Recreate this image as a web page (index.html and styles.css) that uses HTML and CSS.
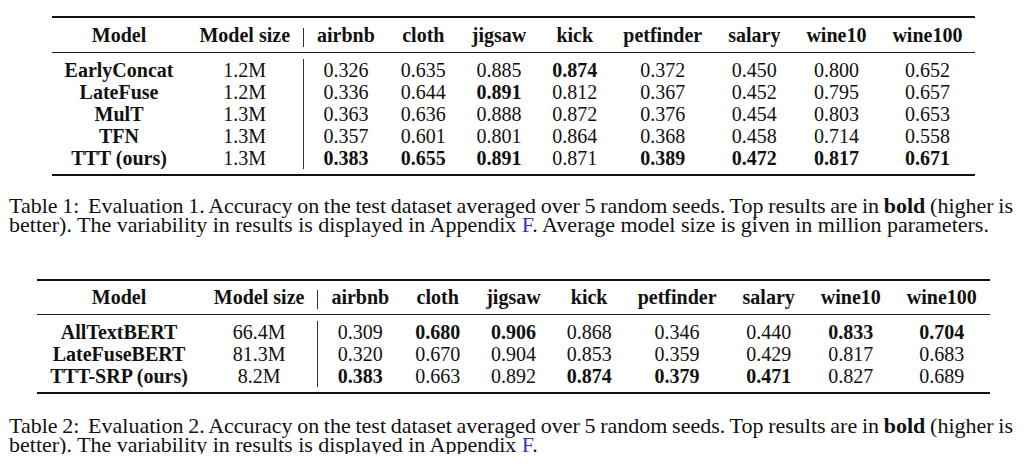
FILE: index.html
```html
<!DOCTYPE html>
<html lang="en">
<head>
<meta charset="utf-8">
<title>Evaluation tables</title>
<link rel="stylesheet" href="styles.css">
</head>
<body>
<main class="page">
  <section class="figure figure-1">
    <table class="results">
      <thead>
        <tr class="gap gap-top"><td colspan="10"></td></tr>
        <tr class="head">
          <th>Model</th><th class="sep">Model size</th>
          <th>airbnb</th><th>cloth</th><th>jigsaw</th><th>kick</th><th>petfinder</th><th>salary</th><th>wine10</th><th>wine100</th>
        </tr>
        <tr class="gap gap-head"><td colspan="10"></td></tr>
      </thead>
      <tbody>
        <tr class="gap gap-mid"><td colspan="10"></td></tr>
        <tr><th>EarlyConcat</th><td class="sep">1.2M</td><td>0.326</td><td>0.635</td><td>0.885</td><td class="b">0.874</td><td>0.372</td><td>0.450</td><td>0.800</td><td>0.652</td></tr>
        <tr><th>LateFuse</th><td class="sep">1.2M</td><td>0.336</td><td>0.644</td><td class="b">0.891</td><td>0.812</td><td>0.367</td><td>0.452</td><td>0.795</td><td>0.657</td></tr>
        <tr><th>MulT</th><td class="sep">1.3M</td><td>0.363</td><td>0.636</td><td>0.888</td><td>0.872</td><td>0.376</td><td>0.454</td><td>0.803</td><td>0.653</td></tr>
        <tr><th>TFN</th><td class="sep">1.3M</td><td>0.357</td><td>0.601</td><td>0.801</td><td>0.864</td><td>0.368</td><td>0.458</td><td>0.714</td><td>0.558</td></tr>
        <tr><th>TTT (ours)</th><td class="sep">1.3M</td><td class="b">0.383</td><td class="b">0.655</td><td class="b">0.891</td><td>0.871</td><td class="b">0.389</td><td class="b">0.472</td><td class="b">0.817</td><td class="b">0.671</td></tr>
        <tr class="gap gap-bottom"><td colspan="10"></td></tr>
      </tbody>
    </table>
  </section>
  <p class="caption caption-1">
    <span class="line line-full"><span class="label">Table 1:</span> Evaluation 1. Accuracy on the test dataset averaged over 5 random seeds. Top results are in <b>bold</b> (higher is</span>
    <span class="line">better). The variability in results is displayed in Appendix <a class="ref" href="#appendix-f">F</a>. Average model size is given in million parameters.</span>
  </p>

  <section class="figure figure-2">
    <table class="results">
      <thead>
        <tr class="gap gap-top"><td colspan="10"></td></tr>
        <tr class="head">
          <th>Model</th><th class="sep">Model size</th>
          <th>airbnb</th><th>cloth</th><th>jigsaw</th><th>kick</th><th>petfinder</th><th>salary</th><th>wine10</th><th>wine100</th>
        </tr>
        <tr class="gap gap-head"><td colspan="10"></td></tr>
      </thead>
      <tbody>
        <tr class="gap gap-mid"><td colspan="10"></td></tr>
        <tr><th>AllTextBERT</th><td class="sep">66.4M</td><td>0.309</td><td class="b">0.680</td><td class="b">0.906</td><td>0.868</td><td>0.346</td><td>0.440</td><td class="b">0.833</td><td class="b">0.704</td></tr>
        <tr><th>LateFuseBERT</th><td class="sep">81.3M</td><td>0.320</td><td>0.670</td><td>0.904</td><td>0.853</td><td>0.359</td><td>0.429</td><td>0.817</td><td>0.683</td></tr>
        <tr><th>TTT-SRP (ours)</th><td class="sep">8.2M</td><td class="b">0.383</td><td>0.663</td><td>0.892</td><td class="b">0.874</td><td class="b">0.379</td><td class="b">0.471</td><td>0.827</td><td>0.689</td></tr>
        <tr class="gap gap-bottom"><td colspan="10"></td></tr>
      </tbody>
    </table>
  </section>
  <p class="caption caption-2">
    <span class="line line-full"><span class="label">Table 2:</span> Evaluation 2. Accuracy on the test dataset averaged over 5 random seeds. Top results are in <b>bold</b> (higher is</span>
    <span class="line">better). The variability in results is displayed in Appendix <a class="ref" href="#appendix-f">F</a>.</span>
  </p>
</main>
</body>
</html>
```

FILE: styles.css
```css
html, body {
  margin: 0;
  padding: 0;
  background: #ffffff;
}

body {
  font-family: "Liberation Serif", "Times New Roman", serif;
  color: #111111;
}

.page {
  width: 1004px;
  padding: 16px 0 0 9px;
}

.figure {
  padding-left: 5px;
}

.results {
  margin: 0 auto;
  border-collapse: separate;
  border-spacing: 0;
  border-top: 2px solid #111111;
  border-bottom: 2px solid #111111;
  font-size: 20px;
}

.results th,
.results td {
  padding: 0 13px;
  text-align: center;
  white-space: nowrap;
  line-height: 22px;
  font-weight: normal;
}

.results th {
  font-weight: bold;
}

.results .b {
  font-weight: bold;
}

.results .head th {
  line-height: 14px;
  padding-bottom: 5px;
  vertical-align: top;
}

.results .sep {
  border-right: 1px solid #333333;
}

.results .gap td {
  padding: 0;
  font-size: 0;
  line-height: 0;
  height: 0;
}

.results .gap-top td {
  padding-top: 10px;
}

.figure-2 .results .gap-top td {
  padding-top: 9px;
}

.results .gap-head td {
  padding-top: 5px;
}

.results .gap-mid td {
  border-top: 1px solid #222222;
  padding-top: 6px;
}

.results .gap-bottom td {
  padding-top: 5px;
}

.caption {
  margin: 0;
  font-size: 22px;
  line-height: 19px;
}

.caption-1 {
  margin-top: 20px;
}

.figure-2 {
  margin-top: 45px;
}

.caption-2 {
  margin-top: 22px;
}

.caption .line {
  display: block;
}

.caption .line-full {
  white-space: nowrap;
  word-spacing: -2.2px;
  text-align: justify;
  text-align-last: justify;
}

.caption .label {
  margin-right: 4px;
}

.caption b {
  font-weight: bold;
}

.caption .ref {
  color: #3434b0;
  text-decoration: none;
}
```
